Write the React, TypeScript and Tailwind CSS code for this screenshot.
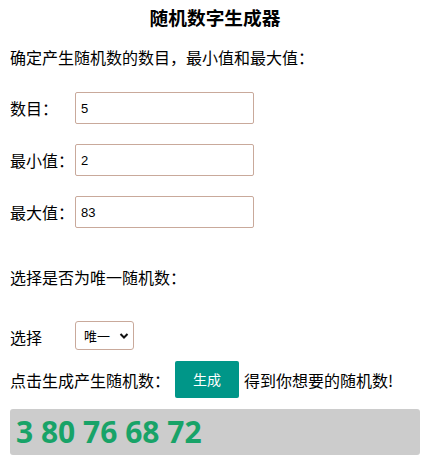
import { useState } from "react";

const rows = [
  { label: "数目：", value: "5" },
  { label: "最小值：", value: "2" },
  { label: "最大值：", value: "83" },
];

export default function App() {
  const [unique, setUnique] = useState("唯一");

  return (
    <div className="w-[430px] h-[462px] bg-white text-black text-[16px] font-['Noto_Sans_CJK_SC','Noto_Sans',sans-serif] px-[10px] overflow-hidden">
      <h3 className="text-center text-[18.7px] font-bold leading-[28px] pt-[3px]">随机数字生成器</h3>

      <p className="mt-[14px] leading-[24px]">确定产生随机数的数目，最小值和最大值：</p>

      <div className="mt-[23px] flex flex-col gap-[20px]">
        {rows.map((r) => (
          <div key={r.label} className="flex items-center h-[32px]">
            <span className="w-[65px] leading-[24px]">{r.label}</span>
            <input
              defaultValue={r.value}
              className="w-[179px] h-[32px] border border-[#c9a99b] rounded-[2px] px-[5px] text-[13px] font-['Liberation_Sans',sans-serif] outline-none"
            />
          </div>
        ))}
      </div>

      <p className="mt-[37px] leading-[24px]">选择是否为唯一随机数：</p>

      <div className="mt-[32px] flex items-center h-[29px]">
        <span className="w-[65px] leading-[24px] mt-[3px]">选择</span>
        <div className="relative w-[59px] h-[29px] border border-[#c9a99b] rounded-[3px] flex items-center">
          <select
            value={unique}
            onChange={(e) => setUnique(e.target.value)}
            className="appearance-none w-full h-full bg-transparent pl-[8px] text-[13px] outline-none"
          >
            <option>唯一</option>
            <option>不唯一</option>
          </select>
          <svg
            className="absolute right-[4px] top-[10px] pointer-events-none"
            width="10"
            height="8"
            viewBox="0 0 10 8"
          >
            <path d="M1.5 2 L5 5.5 L8.5 2" fill="none" stroke="#111" strokeWidth="2" />
          </svg>
        </div>
      </div>

      <div className="mt-[11px] flex items-center h-[37px]">
        <span className="leading-[24px]">点击生成产生随机数：</span>
        <button className="ml-[5px] w-[64px] h-[37px] bg-[#009688] text-white rounded-[2px] text-[14px]">
          生成
        </button>
        <span className="ml-[5px] leading-[24px]">得到你想要的随机数!</span>
      </div>

      <div className="mt-[11px] h-[46px] bg-[#cccccc] rounded-[3px] flex items-center px-[6px]">
        <span className="text-[30px] font-bold text-[#18a368] font-['Open_Sans',sans-serif] leading-none">
          3 80 76 68 72
        </span>
      </div>
    </div>
  );
}
